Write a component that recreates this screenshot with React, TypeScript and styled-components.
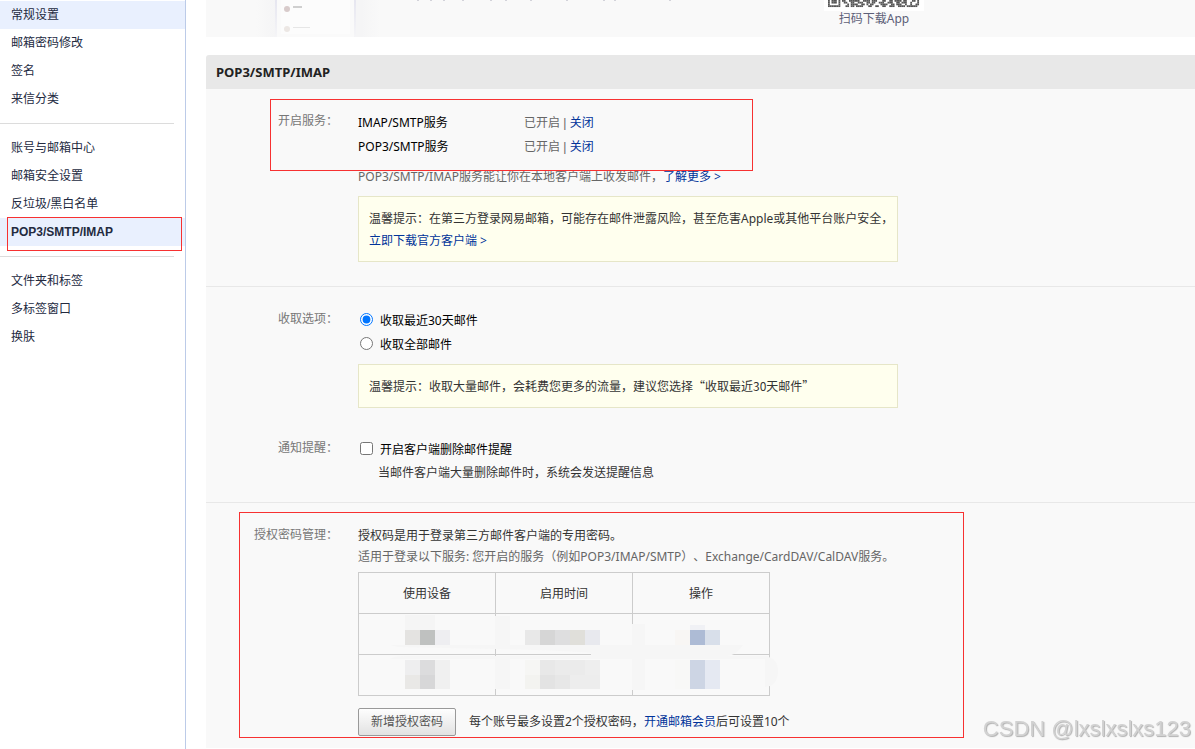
import React from "react";
import styled, { createGlobalStyle, css } from "styled-components";

const GlobalStyle = createGlobalStyle`
  * { box-sizing: border-box; }
  html, body, #root { height: 100%; }
  body {
    margin: 0;
    background: #fff;
    color: #333;
    font: 12px/24px "Noto Sans", "Noto Sans CJK SC", sans-serif;
    text-spacing-trim: space-all;
  }
  a { color: #003399; text-decoration: none; }
  p, h2, ul { margin: 0; padding: 0; }
`;

const red = "#f73131";

const Page = styled.div`
  display: flex;
  min-height: 100%;
`;

const Sidebar = styled.nav`
  flex: 0 0 186px;
  padding-top: 1px;
  border-right: 1px solid #bccbe8;
  font-family: "Liberation Sans", "Noto Sans CJK SC", sans-serif;
`;

const MenuGroup = styled.ul`
  list-style: none;
  & + & {
    margin-top: 10px;
  }
  & + &::before {
    content: "";
    display: block;
    width: 174px;
    margin-bottom: 10px;
    border-top: 1px solid #dcdcdc;
  }
`;

const MenuItem = styled.li`
  position: relative;
`;

const MenuLink = styled.a<{ $shaded?: boolean; $bold?: boolean }>`
  display: block;
  height: 28px;
  padding-left: 11px;
  line-height: 28px;
  color: #232a3f;
  background: ${(p) => (p.$shaded ? "#e9f0fe" : "transparent")};
  font-weight: ${(p) => (p.$bold ? 700 : 400)};
`;

const frame = css`
  position: absolute;
  border: 1px solid ${red};
  pointer-events: none;
`;

const MenuFrame = styled.span`
  ${frame}
  inset: -1px 3px -5px 7px;
`;

const Main = styled.main`
  flex: 1;
  min-width: 0;
  padding-left: 20px;
`;

const Banner = styled.section`
  display: flex;
  height: 37px;
  overflow: hidden;
  background: #f9f9f9;
`;

const PhoneArt = styled.svg`
  flex: none;
  width: 618px;
  height: 37px;
`;

const QrBlock = styled.div`
  width: 100px;
  text-align: center;
  color: #5d6078;
  line-height: 16px;
`;

const QrArt = styled.svg`
  display: block;
  width: 100px;
  height: 11px;
`;

const Title = styled.h2`
  height: 34px;
  margin-top: 18px;
  padding-left: 10px;
  border-top-left-radius: 3px;
  background: #e8e8e8;
  color: #222;
  font-size: 13px;
  line-height: 34px;
`;

const Panel = styled.div`
  background: #f9f9f9;
`;

const Section = styled.section<{ $bottom: number }>`
  position: relative;
  padding: 22px 0 ${(p) => p.$bottom}px;
  & + & {
    border-top: 1px solid #e8e8e8;
  }
`;

const Row = styled.div`
  display: grid;
  grid-template-columns: 132px minmax(0, 1fr);
  column-gap: 20px;
  & + & {
    margin-top: 30px;
  }
`;

const RowLabel = styled.div`
  line-height: 20px;
  text-align: right;
  color: #777;
`;

const ServiceLine = styled.div`
  display: grid;
  grid-template-columns: 166px 1fr;
  height: 24px;
  color: #000;
`;

const Status = styled.span`
  color: #666;
  font-family: "Liberation Sans", "Noto Sans CJK SC", sans-serif;
`;

const Plain = styled.p<{ $muted?: boolean; $gap?: number; $indent?: number }>`
  margin-top: ${(p) => p.$gap ?? 0}px;
  padding-left: ${(p) => p.$indent ?? 0}px;
  line-height: 21px;
  color: ${(p) => (p.$muted ? "#666" : "#333")};
`;

const Note = styled.div`
  max-width: 540px;
  margin-top: 7px;
  padding: 11px 0 9px 10px;
  border: 1px solid #e6e6c8;
  background: #ffffee;
  line-height: 22px;
  p + & {
    margin-top: 9px;
  }
`;

const Quoted = styled.span`
  font-family: "Noto Sans CJK SC", sans-serif;
  line-height: 16px;
`;

const Choice = styled.label`
  display: flex;
  align-items: center;
  gap: 7px;
  height: 24px;
  padding-left: 2px;
  color: #000;
  input {
    width: 13px;
    height: 13px;
    margin: 0 0 3px;
  }
`;

const TableWrap = styled.div`
  position: relative;
  width: 412px;
  margin-top: 5px;
`;

const DeviceTable = styled.table`
  width: 100%;
  table-layout: fixed;
  border-collapse: collapse;
  th, td {
    height: 41px;
    padding: 2px 0 0;
    border: 1px solid #ccc;
    font-weight: 400;
    text-align: center;
  }
`;

const Smudges = styled.svg`
  position: absolute;
  top: 0;
  left: 0;
  width: 424px;
  height: 124px;
`;

const Actions = styled.div`
  display: flex;
  align-items: center;
  gap: 13px;
  margin-top: 12px;
`;

const AddButton = styled.button`
  width: 98px;
  height: 28px;
  padding: 0;
  border: 1px solid #999;
  border-radius: 2px;
  background: linear-gradient(#fefefe, #e2e2e2);
  color: #555;
  font: inherit;
`;

const ServiceFrame = styled.div`
  ${frame}
  top: 10px;
  left: 64px;
  width: 483px;
  height: 72px;
`;

const CodeFrame = styled.div`
  ${frame}
  top: 9px;
  left: 33px;
  width: 725px;
  height: 226px;
`;

const Watermark = styled.div`
  position: fixed;
  right: 4px;
  bottom: 6px;
  color: #d2d2d2;
  font: 22px/28px "Liberation Sans", sans-serif;
  text-shadow: 1px 1px 1px #b0b0b0;
`;

const menu = [
  ["常规设置", "邮箱密码修改", "签名", "来信分类"],
  ["账号与邮箱中心", "邮箱安全设置", "反垃圾/黑白名单", "POP3/SMTP/IMAP"],
  ["文件夹和标签", "多标签窗口", "换肤"],
];

// x, y, width, height and fill of each mosaic tile over the table
const tiles: [number, number, number, number, string][] = [
  [47, 43, 30, 15, "#f5f5f5"],
  [47, 58, 15, 15, "#e4e3e1"],
  [62, 58, 15, 15, "#bfc1c0"],
  [77, 58, 15, 15, "#eeeef1"],
  [137, 44, 15, 32, "#f6f6f6"],
  [167, 58, 15, 15, "#e8e8e8"],
  [182, 58, 15, 15, "#d6d6d6"],
  [197, 58, 15, 15, "#dededf"],
  [212, 58, 15, 15, "#e0dfda"],
  [227, 58, 15, 15, "#e8e9ee"],
  [274, 52, 13, 66, "#f6f6f6"],
  [317, 58, 15, 15, "#f8f6f4"],
  [332, 53, 15, 5, "#f0f1f5"],
  [332, 58, 15, 15, "#adbbd5"],
  [347, 58, 15, 15, "#d8dfea"],
  [137, 85, 15, 32, "#f6f6f6"],
  [47, 88, 15, 15, "#eeeeef"],
  [62, 88, 15, 15, "#dcdcdd"],
  [77, 88, 15, 29, "#f0f0f0"],
  [47, 103, 15, 14, "#e9e8e6"],
  [62, 103, 15, 14, "#d7d7d8"],
  [167, 88, 15, 15, "#f6f6f4"],
  [182, 88, 15, 15, "#e8e8e8"],
  [197, 88, 30, 15, "#ebebeb"],
  [227, 88, 15, 15, "#eeeeee"],
  [167, 103, 15, 14, "#f3f3f0"],
  [182, 103, 15, 14, "#e3e3e3"],
  [197, 103, 15, 14, "#e7e7e7"],
  [212, 103, 30, 14, "#ededed"],
  [317, 88, 15, 29, "#f8f8f7"],
  [332, 88, 15, 29, "#cdd5e4"],
  [347, 88, 15, 29, "#e5e9f2"],
];

const qrRows = [
  "1011101011001111110011110111000110011011110110001101",
  "1011101001100110011100110110011100111001101110010001",
  "1000001000010111100110101100001111001101110010010011",
  "1111111000110110111100011001100110011100111101111110",
];

const bannerSpecks = [417, 430, 443, 462, 490, 505, 530, 566, 603, 614, 669];

export default function App() {
  return (
    <Page>
      <GlobalStyle />
      <Sidebar>
        {menu.map((group, g) => (
          <MenuGroup key={g}>
            {group.map((name, i) => {
              const current = g === 1 && i === 3;
              return (
                <MenuItem key={name}>
                  <MenuLink href="#" $shaded={current || (g === 0 && i === 0)} $bold={current}>
                    {name}
                  </MenuLink>
                  {current && <MenuFrame />}
                </MenuItem>
              );
            })}
          </MenuGroup>
        ))}
      </Sidebar>

      <Main>
        <Banner>
          <PhoneArt viewBox="0 0 618 37" aria-hidden="true">
            <defs>
              <linearGradient id="halo">
                <stop offset="0" stopColor="#f9f9f9" />
                <stop offset="0.15" stopColor="#f5f5f6" />
                <stop offset="0.85" stopColor="#f5f5f6" />
                <stop offset="1" stopColor="#f9f9f9" />
              </linearGradient>
              <linearGradient id="edge" x2="0" y2="1">
                <stop offset="0" stopColor="#e6e6f0" />
                <stop offset="1" stopColor="#f5f5f7" />
              </linearGradient>
            </defs>
            <rect x="50" width="124" height="37" fill="url(#halo)" />
            <rect x="69" width="81" height="37" fill="url(#edge)" />
            <rect x="71" width="77" height="37" fill="#fafafa" />
            <rect x="75" width="69" height="34" fill="#fcfcfc" />
            <circle cx="81" cy="9" r="3" fill="#d8cbcb" />
            <rect x="87" y="6" width="9" height="2" fill="#cfcfcf" />
            <circle cx="81" cy="29" r="3" fill="#ece7e4" />
            <rect x="87" y="27" width="17" height="1" fill="#e6e6e6" />
            {bannerSpecks.map((x) => (
              <rect key={x} x={x - 206} width="2" height="1" fill="#d3d3da" />
            ))}
          </PhoneArt>
          <QrBlock>
            <QrArt viewBox="0 0 100 11" aria-hidden="true">
              <rect width="100" height="11" fill="#fff" />
              {qrRows.map((row, y) =>
                row.split("").map((bit, x) =>
                  bit === "1" ? (
                    <rect key={`${x}-${y}`} x={4 + x * 1.75} y={y * 1.75} width="1.8" height="1.8" fill="#555" />
                  ) : null
                )
              )}
            </QrArt>
            扫码下载App
          </QrBlock>
        </Banner>

        <Title>POP3/SMTP/IMAP</Title>
        <Panel>
          <Section $bottom={24}>
            <Row>
              <RowLabel>开启服务：</RowLabel>
              <div>
                {["IMAP/SMTP服务", "POP3/SMTP服务"].map((name) => (
                  <ServiceLine key={name}>
                    <span>{name}</span>
                    <Status>
                      已开启 | <a href="#">关闭</a>
                    </Status>
                  </ServiceLine>
                ))}
                <Plain $muted $gap={7}>
                  POP3/SMTP/IMAP服务能让你在本地客户端上收发邮件，<a href="#">了解更多 &gt;</a>
                </Plain>
                <Note>
                  温馨提示：在第三方登录网易邮箱，可能存在邮件泄露风险，甚至危害Apple或其他平台账户安全，
                  <br />
                  <a href="#">立即下载官方客户端 &gt;</a>
                </Note>
              </div>
            </Row>
            <ServiceFrame />
          </Section>

          <Section $bottom={19}>
            <Row>
              <RowLabel>收取选项：</RowLabel>
              <div>
                <Choice>
                  <input type="radio" name="range" defaultChecked />
                  收取最近30天邮件
                </Choice>
                <Choice>
                  <input type="radio" name="range" />
                  收取全部邮件
                </Choice>
                <Note>
                  温馨提示：收取大量邮件，会耗费您更多的流量，建议您选择<Quoted>“收取最近30天邮件”</Quoted>
                </Note>
              </div>
            </Row>
            <Row>
              <RowLabel>通知提醒：</RowLabel>
              <div>
                <Choice>
                  <input type="checkbox" />
                  开启客户端删除邮件提醒
                </Choice>
                <Plain $indent={20}>当邮件客户端大量删除邮件时，系统会发送提醒信息</Plain>
              </div>
            </Row>
          </Section>

          <Section $bottom={12}>
            <Row>
              <RowLabel>授权密码管理：</RowLabel>
              <div>
                <Plain>授权码是用于登录第三方邮件客户端的专用密码。</Plain>
                <Plain $muted>
                  适用于登录以下服务: 您开启的服务（例如POP3/IMAP/SMTP）、Exchange/CardDAV/CalDAV服务。
                </Plain>
                <TableWrap>
                  <DeviceTable>
                    <thead>
                      <tr>
                        <th scope="col">使用设备</th>
                        <th scope="col">启用时间</th>
                        <th scope="col">操作</th>
                      </tr>
                    </thead>
                    <tbody>
                      <tr><td /><td /><td /></tr>
                      <tr><td /><td /><td /></tr>
                    </tbody>
                  </DeviceTable>
                  <Smudges viewBox="0 0 424 124" aria-hidden="true">
                    <path d="M33 73H385C380 80 376 83 370 84H233V81C210 79 180 78 137 77L40 75Z" fill="#f6f6f6" />
                    <path d="M32 87Q36 84 48 84H410V87Z" fill="#f6f6f6" />
                    <path d="M407 84Q420 86 420 99Q420 114 407 115Z" fill="#f6f6f6" />
                    {tiles.map(([x, y, w, h, fill]) => (
                      <rect key={`${x}-${y}`} x={x} y={y} width={w} height={h} fill={fill} />
                    ))}
                  </Smudges>
                </TableWrap>
                <Actions>
                  <AddButton type="button">新增授权密码</AddButton>
                  <span>
                    每个账号最多设置2个授权密码，<a href="#">开通邮箱会员</a>后可设置10个
                  </span>
                </Actions>
              </div>
            </Row>
            <CodeFrame />
          </Section>
        </Panel>
      </Main>
      <Watermark>CSDN @lxslxslxs123</Watermark>
    </Page>
  );
}
